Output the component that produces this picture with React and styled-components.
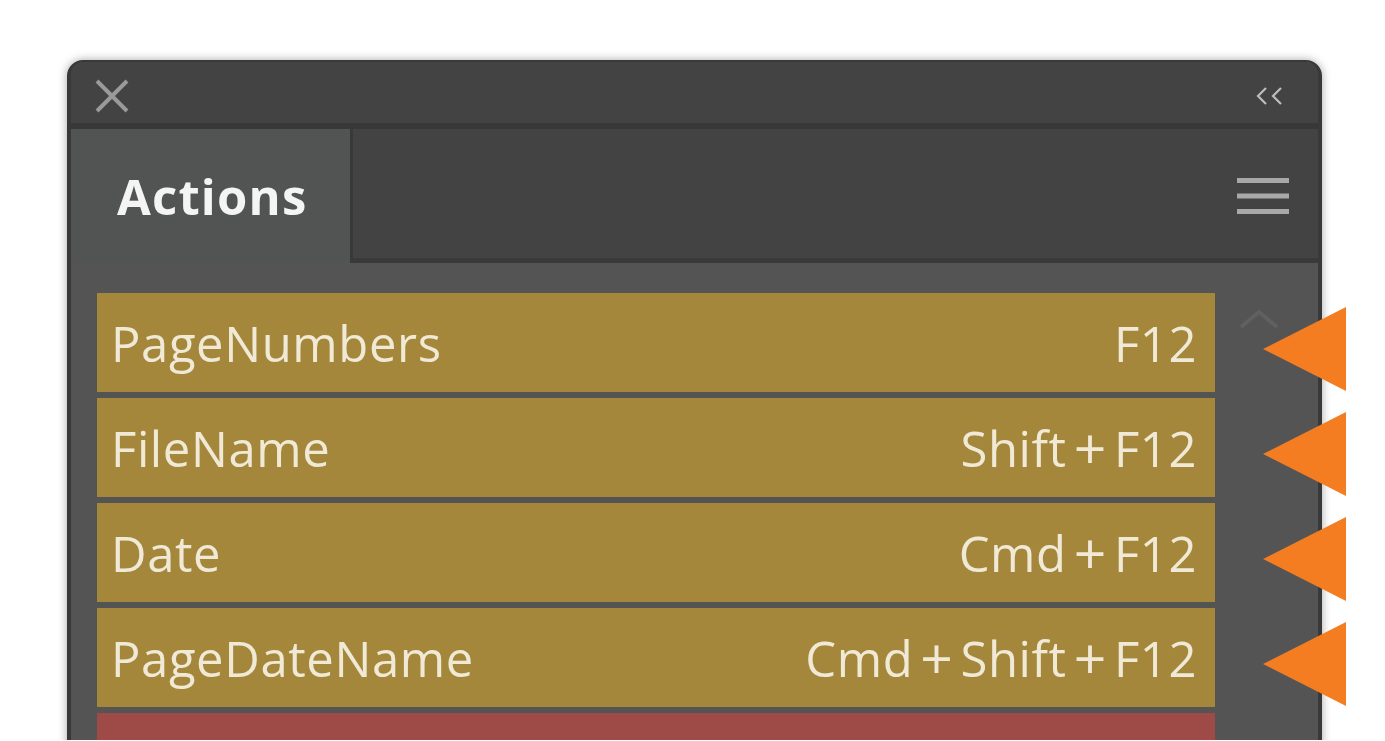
import React from "react";
import styled, { createGlobalStyle } from "styled-components";

const Global = createGlobalStyle`
  html, body { margin: 0; padding: 0; background: #ffffff; }
  #root { height: 740px; overflow: hidden; }
`;

const Page = styled.div`
  padding: 60px 0 0 67px;
`;

const Panel = styled.div`
  position: relative;
  width: 1255px;
  height: 760px;
  box-sizing: border-box;
  border: 4px solid #393939;
  border-top-width: 2px;
  border-radius: 16px 16px 0 0;
  background: #535453;
  box-shadow: 0 0 10px rgba(0, 0, 0, 0.35);
  display: flex;
  flex-direction: column;
  font-family: "Open Sans", "DejaVu Sans", sans-serif;
`;

const TitleBar = styled.div`
  flex: none;
  height: 67px;
  background: #434343;
  border-radius: 12px 12px 0 0;
  border-bottom: 6px solid #383838;
  display: flex;
  align-items: center;
  justify-content: space-between;
  padding: 6px 34px 0 24px;
  box-sizing: border-box;
`;

const IconButton = styled.div`
  display: flex;
  align-items: center;
  justify-content: center;
`;

const TabRow = styled.div`
  height: 134px;
  flex: none;
  display: flex;
  background: #434343;
`;

const Tab = styled.div`
  width: 282px;
  background: #525453;
  border-right: 3px solid #393939;
  display: flex;
  align-items: center;
  padding-left: 46px;
  box-sizing: border-box;
  color: #f4f4f4;
  font-size: 49px;
  font-weight: 700;
  letter-spacing: 1.2px;
`;

const TabFill = styled.div`
  flex: 1;
  display: flex;
  align-items: center;
  justify-content: flex-end;
  padding-right: 29px;
  border-bottom: 5px solid #3a3a3a;
  padding-top: 5px;
`;

const Body = styled.div`
  flex: 1;
  display: flex;
  padding: 30px 0 0 26px;
`;

const List = styled.div`
  width: 1118px;
  display: flex;
  flex-direction: column;
  gap: 6px;
`;

const Row = styled.div`
  position: relative;
  height: 99px;
  flex: none;
  background: ${(p) => (p.$tone === "red" ? "#9e4b48" : "#a4873a")};
  display: flex;
  align-items: center;
  justify-content: space-between;
  padding: 0 18px 0 14px;
  box-sizing: border-box;
  color: #efe9d6;
  font-size: 49px;
  font-weight: 400;
  letter-spacing: 0.6px;
`;

const Label = styled.span`
  white-space: nowrap;
`;

const Plus = styled.span`
  font-size: 57px;
  line-height: 1;
  margin: 0 7px;
  vertical-align: -2px;
`;

const Arrow = styled.svg`
  position: absolute;
  left: calc(100% + 48px);
  top: 14px;
  width: 83px;
  height: 84px;
`;

const ScrollCol = styled.div`
  flex: 1;
  display: flex;
  justify-content: center;
  padding: 16px 16px 0 0;
`;

function CloseIcon() {
  return (
    <svg width="34" height="34" viewBox="0 0 34 34">
      <path d="M2 2 L32 32 M32 2 L2 32" stroke="#9a9a9a" strokeWidth="4" fill="none" />
    </svg>
  );
}

function CollapseIcon() {
  return (
    <svg width="28" height="18" viewBox="0 0 28 18">
      <path d="M10 1 L2 9 L10 17 M25 1 L17 9 L25 17" stroke="#bdbdbd" strokeWidth="2.2" fill="none" />
    </svg>
  );
}

function MenuIcon() {
  return (
    <svg width="52" height="36" viewBox="0 0 52 36">
      <rect x="0" y="0" width="52" height="5" fill="#a8a8a8" />
      <rect x="0" y="15.5" width="52" height="5" fill="#a8a8a8" />
      <rect x="0" y="31" width="52" height="5" fill="#a8a8a8" />
    </svg>
  );
}

function ScrollUp() {
  return (
    <svg width="40" height="20" viewBox="0 0 40 20">
      <path d="M2 18 L20 3 L38 18" stroke="#5f605f" strokeWidth="4" fill="none" />
    </svg>
  );
}

function Shortcut({ keys }) {
  const parts = keys.split("+");
  return (
    <Label>
      {parts.map((k, i) => (
        <React.Fragment key={i}>
          {i > 0 && <Plus>+</Plus>}
          {k}
        </React.Fragment>
      ))}
    </Label>
  );
}

const actions = [
  { name: "PageNumbers", key: "F12", arrow: true },
  { name: "FileName", key: "Shift+F12", arrow: true },
  { name: "Date", key: "Cmd+F12", arrow: true },
  { name: "PageDateName", key: "Cmd+Shift+F12", arrow: true },
  { name: "", key: "", tone: "red" },
];

export default function App() {
  return (
    <>
      <Global />
      <Page>
        <Panel>
          <TitleBar>
            <IconButton><CloseIcon /></IconButton>
            <IconButton><CollapseIcon /></IconButton>
          </TitleBar>
          <TabRow>
            <Tab>Actions</Tab>
            <TabFill><MenuIcon /></TabFill>
          </TabRow>
          <Body>
            <List>
              {actions.map((a, i) => (
                <Row key={i} $tone={a.tone}>
                  <Label>{a.name}</Label>
                  <Shortcut keys={a.key} />
                  {a.arrow && (
                    <Arrow viewBox="0 0 83 84">
                      <polygon points="0,42 83,0 83,84" fill="#f47d22" />
                    </Arrow>
                  )}
                </Row>
              ))}
            </List>
            <ScrollCol><ScrollUp /></ScrollCol>
          </Body>
        </Panel>
      </Page>
    </>
  );
}
